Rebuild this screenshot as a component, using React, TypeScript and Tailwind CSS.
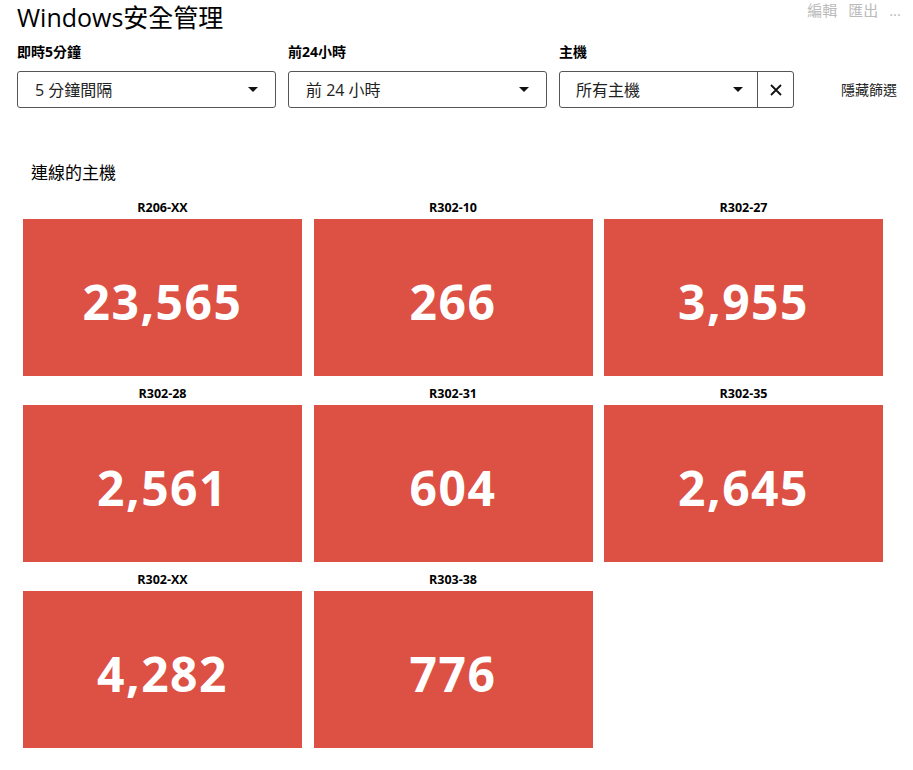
import React from 'react';

const hosts = [
  { name: 'R206-XX', count: '23,565' },
  { name: 'R302-10', count: '266' },
  { name: 'R302-27', count: '3,955' },
  { name: 'R302-28', count: '2,561' },
  { name: 'R302-31', count: '604' },
  { name: 'R302-35', count: '2,645' },
  { name: 'R302-XX', count: '4,282' },
  { name: 'R303-38', count: '776' },
];

const font = "font-['Open_Sans','Noto_Sans_CJK_TC',sans-serif]";

const Caret = () => (
  <svg width="10" height="6" viewBox="0 0 10 6" className="shrink-0">
    <path d="M0 0 L10 0 L5 5 Z" fill="#111" />
  </svg>
);

const Dropdown: React.FC<{ label: string; value: string; width: string }> = ({ label, value, width }) => (
  <div className="flex flex-col">
    <div className="text-[14px] font-bold text-black h-[19px] leading-[19px] mb-[10px]">{label}</div>
    <div className={`${width} h-[37px] border border-[#555] rounded-[3px] flex items-center justify-between pl-[17px] pr-[17px] text-[16px] text-[#222]`}>
      <span>{value}</span>
      <Caret />
    </div>
  </div>
);

const App: React.FC = () => {
  return (
    <div className={`${font} bg-white w-[913px] h-[770px] overflow-hidden relative`}>
      <div className="absolute top-0 right-[12px] flex gap-[11px] text-[15px] leading-[20px] text-[#bbb]">
        <span>編輯</span>
        <span>匯出</span>
        <span>...</span>
      </div>
      <div className="pl-[17px]">
        <h1 className="text-[25px] leading-[34px] text-black">Windows安全管理</h1>
        <div className="flex items-end mt-[8px]">
          <Dropdown label="即時5分鐘" value="5 分鐘間隔" width="w-[259px]" />
          <div className="w-[12px]" />
          <Dropdown label="前24小時" value="前 24 小時" width="w-[259px]" />
          <div className="w-[12px]" />
          <div className="flex flex-col">
            <div className="text-[14px] font-bold text-black h-[19px] leading-[19px] mb-[10px]">主機</div>
            <div className="flex h-[37px] border border-[#555] rounded-[3px] w-[235px]">
              <div className="flex-1 flex items-center justify-between pl-[16px] pr-[14px] text-[16px] text-[#222]">
                <span>所有主機</span>
                <Caret />
              </div>
              <div className="w-[36px] border-l border-[#555] flex items-center justify-center">
                <svg width="12" height="12" viewBox="0 0 12 12">
                  <path d="M1 1 L11 11 M11 1 L1 11" stroke="#111" strokeWidth="1.8" />
                </svg>
              </div>
            </div>
          </div>
          <div className="h-[37px] flex items-center ml-[47px] text-[14px] text-[#222]">隱藏篩選</div>
        </div>
      </div>

      <div className="pl-[31px] mt-[53px] text-[17px] text-black leading-[24px]">連線的主機</div>

      <div className="pl-[23px] mt-[5px] grid grid-cols-[279px_279px_279px] gap-x-[11.5px]">
        {hosts.map((h) => (
          <div key={h.name} className="flex flex-col">
            <div className="h-[29px] flex items-center justify-center text-[12.5px] font-bold text-black pt-[7px]">
              {h.name}
            </div>
            <div className="h-[157px] bg-[#dd5044] flex items-center justify-center pt-[8px] text-white text-[48px] font-bold tracking-[1.5px]">
              {h.count}
            </div>
          </div>
        ))}
      </div>
    </div>
  );
};

export default App;
